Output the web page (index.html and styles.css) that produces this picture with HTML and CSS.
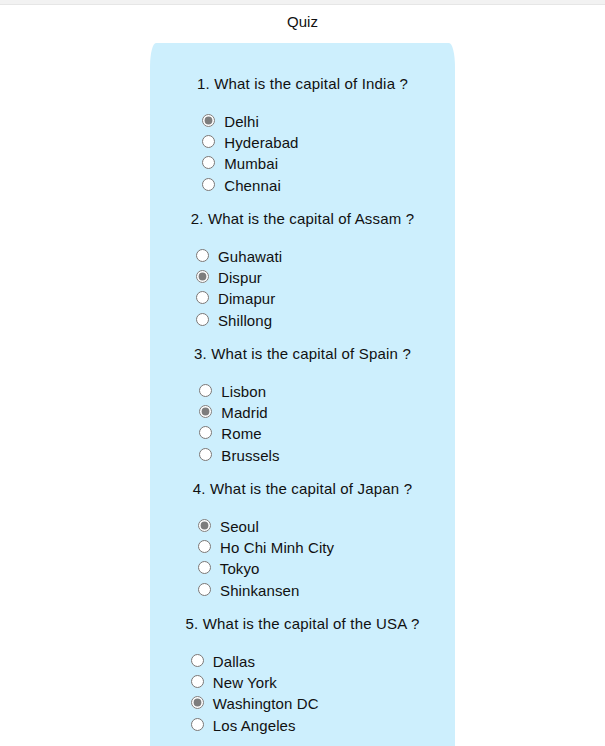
FILE: index.html
```html
<!DOCTYPE html>
<html lang="en">
<head>
<meta charset="utf-8">
<title>Quiz</title>
<link rel="stylesheet" href="styles.css">
</head>
<body>
<div class="topbar"></div>
<div class="header">Quiz</div>
<main class="card">
  <form class="quiz">
    <div class="question">
      <p class="title">1. What is the capital of India ?</p>
      <label class="option"><input type="radio" name="q1" checked> Delhi</label>
      <label class="option"><input type="radio" name="q1"> Hyderabad</label>
      <label class="option"><input type="radio" name="q1"> Mumbai</label>
      <label class="option"><input type="radio" name="q1"> Chennai</label>
    </div>
    <div class="question">
      <p class="title">2. What is the capital of Assam ?</p>
      <label class="option"><input type="radio" name="q2"> Guhawati</label>
      <label class="option"><input type="radio" name="q2" checked> Dispur</label>
      <label class="option"><input type="radio" name="q2"> Dimapur</label>
      <label class="option"><input type="radio" name="q2"> Shillong</label>
    </div>
    <div class="question">
      <p class="title">3. What is the capital of Spain ?</p>
      <label class="option"><input type="radio" name="q3"> Lisbon</label>
      <label class="option"><input type="radio" name="q3" checked> Madrid</label>
      <label class="option"><input type="radio" name="q3"> Rome</label>
      <label class="option"><input type="radio" name="q3"> Brussels</label>
    </div>
    <div class="question">
      <p class="title">4. What is the capital of Japan ?</p>
      <label class="option"><input type="radio" name="q4" checked> Seoul</label>
      <label class="option"><input type="radio" name="q4"> Ho Chi Minh City</label>
      <label class="option"><input type="radio" name="q4"> Tokyo</label>
      <label class="option"><input type="radio" name="q4"> Shinkansen</label>
    </div>
    <div class="question">
      <p class="title">5. What is the capital of the USA ?</p>
      <label class="option"><input type="radio" name="q5"> Dallas</label>
      <label class="option"><input type="radio" name="q5"> New York</label>
      <label class="option"><input type="radio" name="q5" checked> Washington DC</label>
      <label class="option"><input type="radio" name="q5"> Los Angeles</label>
    </div>
  </form>
</main>
</body>
</html>
```
FILE: styles.css
```css
html, body {
  margin: 0;
  padding: 0;
  background: #ffffff;
}
body {
  font-family: "Liberation Sans", Arial, sans-serif;
  font-size: 15px;
  color: #111111;
}
.topbar {
  height: 4px;
  background: #f2f2f2;
  border-bottom: 1px solid #e6e6e6;
}
.header {
  text-align: center;
  line-height: 17px;
  margin-top: 8px;
  height: 17px;
}
.card {
  width: 305px;
  margin: 13px auto 0;
  background: #cdeffd;
  border-radius: 6px 6px 0 0 / 24px 24px 0 0;
  padding: 32px 0 40px;
}
.quiz {
  display: flex;
  flex-direction: column;
  align-items: center;
}
.question {
  width: fit-content;
  margin-bottom: 14px;
}
.title {
  margin: 0 0 18.7px;
  line-height: 17px;
  letter-spacing: 0.18px;
  white-space: nowrap;
}
.option {
  display: block;
  line-height: 21.33px;
  height: 21.33px;
  letter-spacing: 0.1px;
  white-space: nowrap;
}
.option input {
  accent-color: #7d7d7d;
  margin: 3px 5px 0 5px;
}
```
